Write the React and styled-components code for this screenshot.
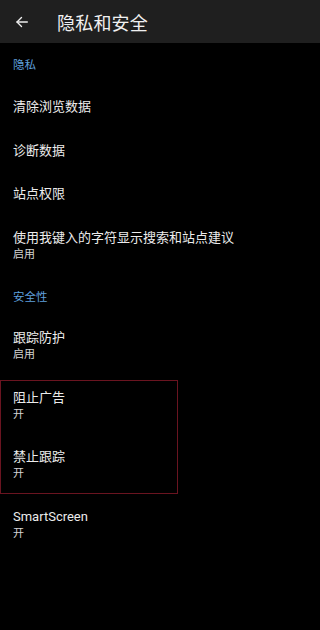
import styled, { createGlobalStyle } from 'styled-components'

const GlobalStyle = createGlobalStyle`
  html, body {
    margin: 0;
    padding: 0;
    background: #000;
  }
  body {
    font-family: Roboto, "Noto Sans CJK SC", "Noto Sans", sans-serif;
    -webkit-font-smoothing: antialiased;
  }
`

const Page = styled.div`
  width: 320px;
  min-height: 630px;
  background: #000;
  color: #ececec;
`

const Header = styled.header`
  height: 43px;
  background: #1f1f1f;
  display: flex;
  align-items: center;
`

const BackButton = styled.button`
  width: 44px;
  height: 43px;
  padding: 0 0 0 16px;
  border: 0;
  background: transparent;
  color: #eee;
  display: flex;
  align-items: center;
  cursor: pointer;
`

const Title = styled.h1`
  margin: 0 0 0 13px;
  font-size: 18px;
  font-weight: 400;
  color: #f0f0f0;
  letter-spacing: 0.2px;
`

const SectionTitle = styled.div`
  height: ${({ $first }) => ($first ? '42px' : '41px')};
  padding-left: 13px;
  display: flex;
  align-items: center;
  font-size: 11.5px;
  color: #5f9fdc;
`

const Row = styled.div`
  height: ${({ $tall }) => ($tall ? '59.5px' : '43.5px')};
  padding-left: 13px;
  display: flex;
  flex-direction: column;
  justify-content: center;
`

const RowTitle = styled.div`
  font-size: 13px;
  line-height: 17px;
  color: #ececec;
`

const RowValue = styled.div`
  font-size: 11px;
  line-height: 15px;
  color: #d4d4d4;
  margin-top: 1px;
`

const Highlight = styled.div`
  position: relative;

  &::after {
    content: '';
    position: absolute;
    top: 4px;
    bottom: 1px;
    left: 0;
    width: 178px;
    border: 1px solid #6a1420;
    box-sizing: border-box;
    pointer-events: none;
  }
`

const BackArrow = () => (
  <svg width="12" height="12" viewBox="0 0 12 12" fill="none" stroke="currentColor" strokeWidth="1.4" strokeLinecap="round" strokeLinejoin="round">
    <path d="M11.3 6H1" />
    <path d="M5.5 1.5L1 6l4.5 4.5" />
  </svg>
)

const Item = ({ title, value }) => (
  <Row $tall={!!value}>
    <RowTitle>{title}</RowTitle>
    {value && <RowValue>{value}</RowValue>}
  </Row>
)

const App = () => (
  <Page>
    <GlobalStyle />
    <Header>
      <BackButton aria-label="返回">
        <BackArrow />
      </BackButton>
      <Title>隐私和安全</Title>
    </Header>

    <SectionTitle $first>隐私</SectionTitle>
    <Item title="清除浏览数据" />
    <Item title="诊断数据" />
    <Item title="站点权限" />
    <Item title="使用我键入的字符显示搜索和站点建议" value="启用" />

    <SectionTitle>安全性</SectionTitle>
    <Item title="跟踪防护" value="启用" />
    <Highlight>
      <Item title="阻止广告" value="开" />
      <Item title="禁止跟踪" value="开" />
    </Highlight>
    <Item title="SmartScreen" value="开" />
  </Page>
)

export default App
